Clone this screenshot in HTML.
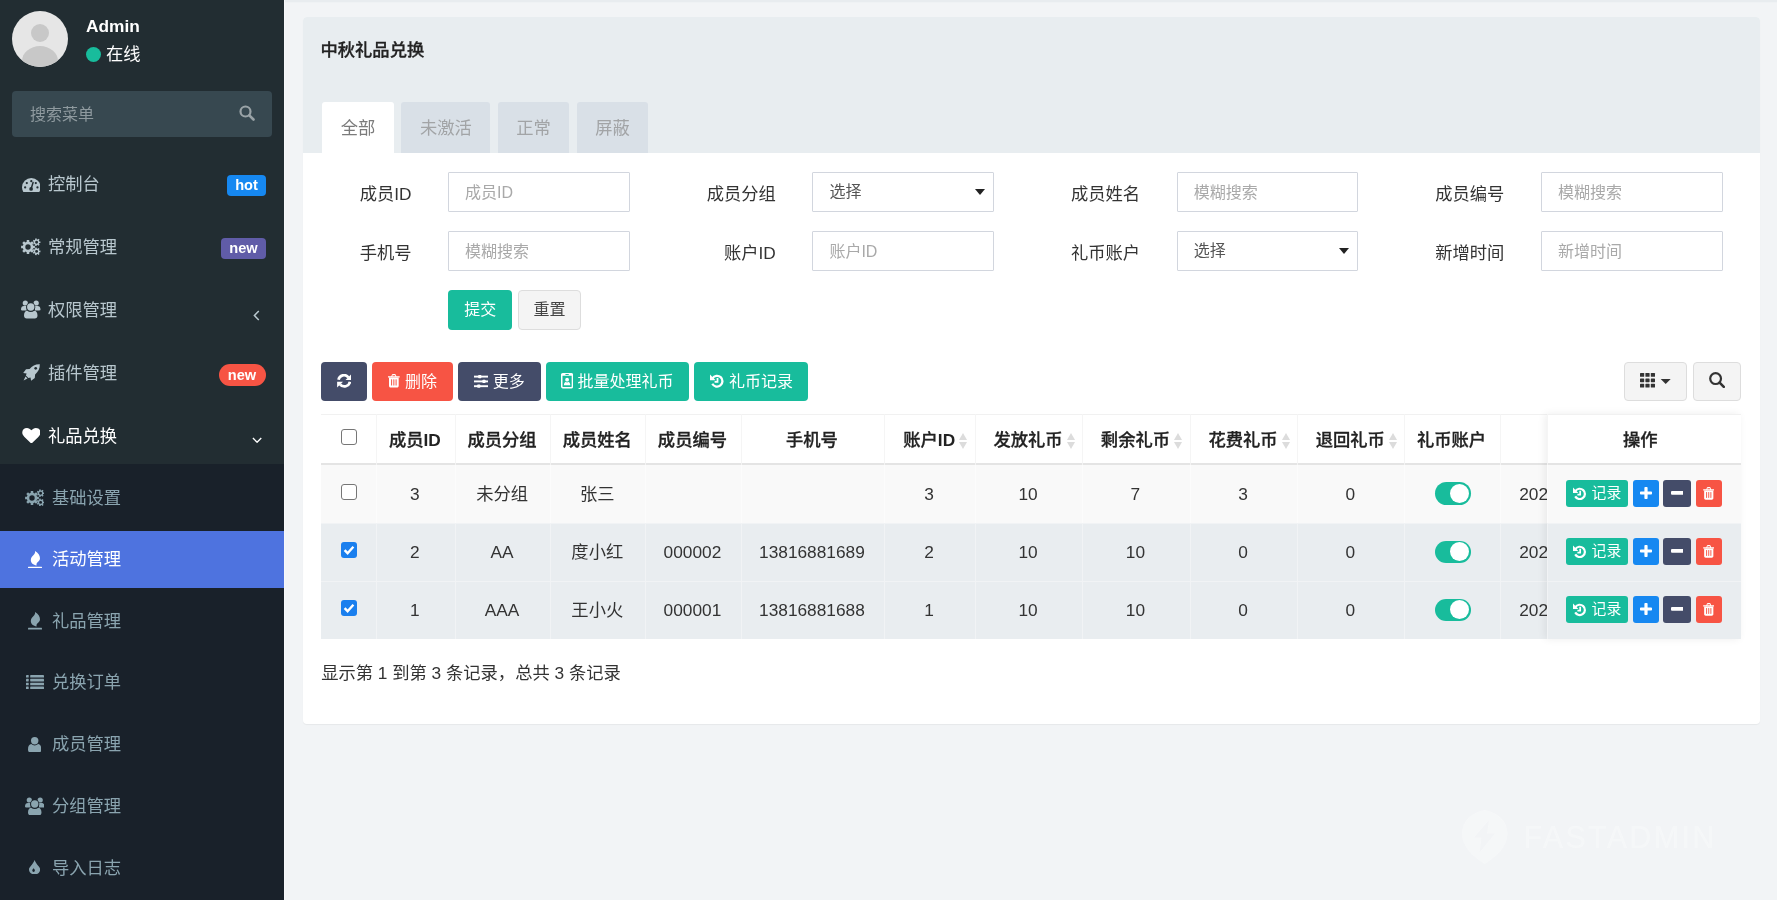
<!DOCTYPE html>
<html lang="zh-CN">
<head>
<meta charset="utf-8">
<title>中秋礼品兑换</title>
<style>
*{box-sizing:border-box;margin:0;padding:0}
html,body{width:1777px;height:900px;overflow:hidden}
body{position:relative;background:#f2f4f6;font-family:"Liberation Sans","Noto Sans CJK SC",sans-serif;font-size:17.3px;color:#333;-webkit-font-smoothing:antialiased}
.abs{position:absolute}
svg{display:block}

/* ---------- sidebar ---------- */
#sidebar{position:absolute;left:0;top:0;width:284px;height:900px;background:#222d32;overflow:hidden}
#avatar{position:absolute;left:12px;top:11px;width:56px;height:56px;border-radius:50%;background:#e6e6e6;overflow:hidden}
#uname{position:absolute;left:86px;top:15px;font-size:17.3px;font-weight:700;color:#fff;line-height:22px;letter-spacing:0}
#ustat{position:absolute;left:86px;top:43px;font-size:17.3px;color:#fff;line-height:22px;white-space:nowrap}
#ustat i{display:inline-block;width:15px;height:15px;border-radius:50%;background:#18bc9c;vertical-align:-2px;margin-right:5px}
#msearch{position:absolute;left:12px;top:91px;width:260px;height:46px;border-radius:4px;background:#374850}
#msearch span{position:absolute;left:18px;top:1px;line-height:46px;font-size:16px;color:#8f9a9f}
#msearch svg{position:absolute;left:227px;top:13.800px}
.mi{position:absolute;left:0;width:284px;height:63px;color:#b8c7ce;font-size:17.3px;white-space:nowrap}
.ic svg{position:absolute}
.mi .tx{position:absolute;left:48px;top:0;line-height:63px}
.mi.on{color:#fff}
.lab{position:absolute;height:21px;line-height:21px;font-size:14.600px;font-weight:700;color:#fff;text-align:center;border-radius:4px}
#submenu{position:absolute;left:0;top:464px;width:284px;height:436px;background:#19212a}
.si{position:absolute;left:0;width:284px;height:57px;color:#8aa4af;font-size:17.3px;white-space:nowrap}
.si .tx{position:absolute;left:52px;top:0;line-height:57px}
.si.on{background:#4e73df;color:#fff}

/* ---------- content ---------- */
#topline{position:absolute;left:284px;top:0;width:1493px;height:2px;background:#e8ecef;box-shadow:0 1px 0 #eff2f4}
#sideline{position:absolute;left:284px;top:0;width:1px;height:900px;background:#f7f8fa}
#panel{position:absolute;left:302.5px;top:17px;width:1457.5px;height:707px;background:#fff;border-radius:4px;box-shadow:0 1px 1px rgba(0,0,0,.05)}
#phead{position:absolute;left:0;top:0;width:100%;height:136px;background:#e8edf0;border-radius:4px 4px 0 0}
#ptitle{position:absolute;left:18px;top:22px;font-size:17.3px;font-weight:500;-webkit-text-stroke:.3px #222;color:#222;line-height:22px}
.tab{position:absolute;top:85px;height:51px;line-height:52.600px;text-align:center;font-size:17.3px;color:#a2a4a6;background:#d9e0e7;border-radius:3px 3px 0 0}
.tab.on{background:#fff;color:#7b7b7b}

/* ---------- form ---------- */
.fl{position:absolute;width:120px;text-align:right;font-size:17.3px;color:#333;line-height:40px;height:40px;white-space:nowrap}
.fi{position:absolute;width:181.5px;height:40px;border:1px solid #d2d6de;background:#fff;font-size:16px;color:#a9a9a9;line-height:38px;padding-left:16px;white-space:nowrap;border-radius:1px}
.fi{line-height:39.400px}
.fi.sel{color:#555;line-height:38px}
.fi.sel:after{content:"";position:absolute;right:7.800px;top:16.200px;border-left:5.300px solid transparent;border-right:5.300px solid transparent;border-top:6px solid #222}
.btn{position:absolute;height:40px;line-height:40px;text-align:center;font-size:16px;color:#fff;border-radius:4px;white-space:nowrap}
/* ---------- toolbar ---------- */
.tb{position:absolute;top:345px;height:39px;line-height:39px;border-radius:4px;color:#fff;font-size:16px;white-space:nowrap}
.tb svg{position:absolute}
.tb span{position:absolute;top:0}
.tbd{position:absolute;top:345px;height:39px;border-radius:4px;background:#f4f4f4;border:1px solid #ddd}

/* ---------- table ---------- */
#tbl{position:absolute;left:18.7px;top:397.2px;width:1419.8px;height:225px;overflow:hidden}
.row{position:absolute;left:0;width:1419.8px}
.row.h{top:0;height:50.5px;background:#fff;box-shadow:inset 0 1px 0 #f1f1f1,inset 0 -2px 0 #e4e4e4;font-weight:500;-webkit-text-stroke:.3px #222;color:#222}
.row.h b{font-weight:700;-webkit-text-stroke:0}
.row.r1{top:50.5px;height:58.1px;background:#f9f9f9}
.row.r2{top:108.6px;height:58.1px;background:#e9edf0;box-shadow:inset 0 1px 0 #f1f3f5}
.row.r3{top:166.7px;height:58.1px;background:#e9edf0;box-shadow:inset 0 1px 0 #f1f3f5}
.c{position:absolute;top:0;height:100%;padding-right:2px;text-align:center;white-space:nowrap;border-left:1px solid rgba(244,244,244,.9);font-size:17.3px}
.row.h .c{line-height:52px}
.row.r1 .c,.row.r2 .c,.row.r3 .c{line-height:58px}
.row.r1 .c{border-left-color:#fcfcfc}
.row.r2 .c,.row.r3 .c{border-left-color:#f1f3f5}
.srt{position:relative}
.srt:after{content:"";position:absolute;right:-12px;top:2.500px;width:0;height:0;border-left:4.900px solid transparent;border-right:4.900px solid transparent;border-bottom:7.800px solid #dcdcdc}
.srt:before{content:"";position:absolute;right:-12px;top:12.300px;width:0;height:0;border-left:4.900px solid transparent;border-right:4.900px solid transparent;border-top:7.800px solid #dcdcdc}
.cb{position:absolute;left:19.600px;width:16px;height:16px;border-radius:3px;border:1.4px solid #767676;background:#fff}
.cb.on{border:none;background:#1a7fee}
.tg{position:absolute;left:29.400px;top:17.8px;width:36.5px;height:22.7px;border-radius:11.4px;background:#18bc9c}
.tg:after{content:"";position:absolute;right:1.7px;top:1.8px;width:19px;height:19px;border-radius:50%;background:#fff}
#fix{position:absolute;left:1244.3px;top:397.2px;width:194px;height:225px;box-shadow:-2px 0 8px rgba(0,0,0,.07)}
#fix .row{width:194px}
.ob{position:absolute;top:15.700px;height:27px;border-radius:3px;color:#fff;font-size:14.8px;line-height:27px;white-space:nowrap}
.ob svg{position:absolute}
#pinfo{position:absolute;left:18.7px;top:645px;font-size:17.3px;line-height:22px;color:#333;white-space:nowrap}

#wm{position:absolute;left:1462px;top:810px;width:260px;height:54px;opacity:.3}
#wm svg{position:absolute;left:0;top:0}
#wm span{position:absolute;left:61.500px;top:9.500px;font-size:30.500px;line-height:34px;color:#fff;letter-spacing:2.300px;white-space:nowrap}
.ob{top:15.600px !important}
#root{position:absolute;left:0;top:0;width:1777px;height:900px;overflow:hidden;background:#f2f4f6;will-change:transform}
</style>
</head>
<body>
<div id="root">

<div id="sidebar">
  <div id="avatar">
    <svg width="56" height="56" viewBox="0 0 56 56"><circle cx="28" cy="22" r="9" fill="#c8c8c8"/><ellipse cx="28" cy="50" rx="18" ry="15" fill="#c8c8c8"/></svg>
  </div>
  <div id="uname">Admin</div>
  <div id="ustat"><i></i>在线</div>
  <div id="msearch"><span>搜索菜单</span>
    <svg width="16" height="16" viewBox="0 0 16 16"><circle cx="6.5" cy="6.5" r="5" fill="none" stroke="#9aa3a7" stroke-width="2.2"/><path d="M10.3 10.3L14.5 14.5" stroke="#9aa3a7" stroke-width="2.6" stroke-linecap="round"/></svg>
  </div>

  <div class="mi" style="top:153px"><span class="ic"><svg style="left:21.6px;top:24.6px" width="18.600" height="14.200" viewBox="0 0 19 14.5"><path fill="#b8c7ce" d="M0 9.500A9.500 9.500 0 0 1 19 9.500C19 11.200 18.600 12.700 17.800 14C17.600 14.300 17.300 14.500 16.900 14.500H2.100C1.700 14.500 1.400 14.300 1.200 14C.4 12.700 0 11.200 0 9.500Z"/><circle cx="3.2" cy="9.6" r="1.15" fill="#222d32"/><circle cx="4.9" cy="5.2" r="1.15" fill="#222d32"/><circle cx="9.5" cy="3.2" r="1.15" fill="#222d32"/><circle cx="14.1" cy="5.2" r="1.15" fill="#222d32"/><circle cx="15.8" cy="9.6" r="1.15" fill="#222d32"/><path d="M9.3 11.2L11.3 4.6" stroke="#222d32" stroke-width="1.5" stroke-linecap="round"/><circle cx="9.3" cy="11.2" r="1.9" fill="#222d32"/></svg></span><span class="tx">控制台</span><span class="lab" style="left:227px;top:22px;width:39px;background:#1688f1">hot</span></div>
  <div class="mi" style="top:216px"><span class="ic"><svg style="left:21.2px;top:22.2px" width="19.5" height="17.5" viewBox="0 0 19.5 17.5"><path fill-rule="evenodd" fill="#b8c7ce" d="M13.89 7.74 L13.89 10.26 L12.14 10.28 L11.54 11.73 L12.76 12.98 L10.98 14.76 L9.73 13.54 L8.28 14.14 L8.26 15.89 L5.74 15.89 L5.72 14.14 L4.27 13.54 L3.02 14.76 L1.24 12.98 L2.46 11.73 L1.86 10.28 L0.11 10.26 L0.11 7.74 L1.86 7.72 L2.46 6.27 L1.24 5.02 L3.02 3.24 L4.27 4.46 L5.72 3.86 L5.74 2.11 L8.26 2.11 L8.28 3.86 L9.73 4.46 L10.98 3.24 L12.76 5.02 L11.54 6.27 L12.14 7.72Z M9.70 9.00 A2.7 2.7 0 1 0 4.30 9.00 A2.7 2.7 0 1 0 9.70 9.00Z M19.42 3.40 L19.42 5.00 L18.29 4.97 L17.88 5.83 L18.61 6.69 L17.35 7.68 L16.68 6.78 L15.75 7.00 L15.53 8.10 L13.97 7.74 L14.25 6.65 L13.51 6.06 L12.51 6.58 L11.81 5.14 L12.84 4.68 L12.84 3.72 L11.81 3.26 L12.51 1.82 L13.51 2.34 L14.25 1.75 L13.97 0.66 L15.53 0.30 L15.75 1.40 L16.68 1.62 L17.35 0.72 L18.61 1.71 L17.88 2.57 L18.29 3.43Z M17.05 4.20 A1.45 1.45 0 1 0 14.15 4.20 A1.45 1.45 0 1 0 17.05 4.20Z M19.42 12.60 L19.42 14.20 L18.29 14.17 L17.88 15.03 L18.61 15.89 L17.35 16.88 L16.68 15.98 L15.75 16.20 L15.53 17.30 L13.97 16.94 L14.25 15.85 L13.51 15.26 L12.51 15.78 L11.81 14.34 L12.84 13.88 L12.84 12.92 L11.81 12.46 L12.51 11.02 L13.51 11.54 L14.25 10.95 L13.97 9.86 L15.53 9.50 L15.75 10.60 L16.68 10.82 L17.35 9.92 L18.61 10.91 L17.88 11.77 L18.29 12.63Z M17.05 13.40 A1.45 1.45 0 1 0 14.15 13.40 A1.45 1.45 0 1 0 17.05 13.40Z"/></svg></span><span class="tx">常规管理</span><span class="lab" style="left:221px;top:22px;width:45px;background:#605ca8">new</span></div>
  <div class="mi" style="top:279px"><span class="ic"><svg style="left:21.2px;top:21.3px" width="19.5" height="18.5" viewBox="0 0 19.5 18.5"><circle cx="4.3" cy="3" r="2.6" fill="#b8c7ce"/><circle cx="15.2" cy="3" r="2.6" fill="#b8c7ce"/><path fill="#b8c7ce" d="M0 9.6C0 7 1.2 6 3 6H5.5V10.5H1.2C.4 10.500 0 10.200 0 9.600Z M19.5 9.6C19.5 7 18.3 6 16.5 6H14V10.5H18.3C19.1 10.500 19.500 10.200 19.500 9.600Z"/><circle cx="9.75" cy="7" r="4.6" fill="#222d32"/><circle cx="9.75" cy="7" r="3.7" fill="#b8c7ce"/><path fill="#b8c7ce" d="M3 15.600C3 12.300 4.400 10.700 6.300 10.700C7.200 11.500 8.400 11.900 9.750 11.900C11.100 11.900 12.300 11.500 13.200 10.700C15.100 10.700 16.500 12.300 16.500 15.600C16.500 17.400 15.400 18.500 13.800 18.500H5.700C4.100 18.500 3 17.400 3 15.600Z"/></svg></span><span class="tx">权限管理</span><span class="abs" style="left:253px;top:30.500px"><svg width="7" height="11" viewBox="0 0 7 11"><path d="M5.800 1L1.400 5.500L5.800 10" fill="none" stroke="#b8c7ce" stroke-width="1.5"/></svg></span></div>
  <div class="mi" style="top:342px"><span class="ic"><svg style="left:22.6px;top:22.4px" width="17" height="17" viewBox="0 0 17 17"><path fill="#b8c7ce" d="M16.800 .2C12.600 0 9.200 1.800 6.600 4.900L3 5.200L.2 8.900L3.600 9.500L2.900 11.600L5.400 14.100L7.500 13.400L8.100 16.800L11.800 14L12.100 10.400C15.200 7.800 17 4.400 16.800 .2Z"/><path fill="#b8c7ce" d="M2.500 12.500L4.500 14.500L.6 16.400Z"/><circle cx="12.700" cy="4.300" r="1.350" fill="#222d32"/></svg></span><span class="tx">插件管理</span><span class="lab" style="left:218.5px;top:22px;width:47px;height:22px;line-height:22px;background:#f75444;border-radius:11px">new</span></div>
  <div class="mi on" style="top:405px"><span class="ic"><svg style="left:21.5px;top:22.6px" width="18.8" height="15.4" viewBox="0 0 19 16"><path fill="#fff" d="M9.5 16C9.300 16 9.100 15.900 8.900 15.700L2.300 9.400C.8 7.900 0 6.500 0 4.800C0 2 1.900 0 4.900 0C6.700 0 8.300 1.100 9.500 2.300C10.700 1.100 12.300 0 14.100 0C17.100 0 19 2 19 4.800C19 6.500 18.200 7.900 16.700 9.400L10.100 15.700C9.900 15.900 9.700 16 9.500 16Z"/></svg></span><span class="tx">礼品兑换</span><span class="abs" style="left:251.500px;top:31.800px"><svg width="10.200" height="6.500" viewBox="0 0 11 7"><path d="M1 1.200L5.500 5.600L10 1.200" fill="none" stroke="#fff" stroke-width="1.5"/></svg></span></div>

  <div id="submenu">
    <div class="si" style="top:5.5px"><span class="ic"><svg style="left:24.9px;top:19.2px" width="19.5" height="17.5" viewBox="0 0 19.5 17.5"><path fill-rule="evenodd" fill="#8aa4af" d="M13.89 7.74 L13.89 10.26 L12.14 10.28 L11.54 11.73 L12.76 12.98 L10.98 14.76 L9.73 13.54 L8.28 14.14 L8.26 15.89 L5.74 15.89 L5.72 14.14 L4.27 13.54 L3.02 14.76 L1.24 12.98 L2.46 11.73 L1.86 10.28 L0.11 10.26 L0.11 7.74 L1.86 7.72 L2.46 6.27 L1.24 5.02 L3.02 3.24 L4.27 4.46 L5.72 3.86 L5.74 2.11 L8.26 2.11 L8.28 3.86 L9.73 4.46 L10.98 3.24 L12.76 5.02 L11.54 6.27 L12.14 7.72Z M9.70 9.00 A2.7 2.7 0 1 0 4.30 9.00 A2.7 2.7 0 1 0 9.70 9.00Z M19.42 3.40 L19.42 5.00 L18.29 4.97 L17.88 5.83 L18.61 6.69 L17.35 7.68 L16.68 6.78 L15.75 7.00 L15.53 8.10 L13.97 7.74 L14.25 6.65 L13.51 6.06 L12.51 6.58 L11.81 5.14 L12.84 4.68 L12.84 3.72 L11.81 3.26 L12.51 1.82 L13.51 2.34 L14.25 1.75 L13.97 0.66 L15.53 0.30 L15.75 1.40 L16.68 1.62 L17.35 0.72 L18.61 1.71 L17.88 2.57 L18.29 3.43Z M17.05 4.20 A1.45 1.45 0 1 0 14.15 4.20 A1.45 1.45 0 1 0 17.05 4.20Z M19.42 12.60 L19.42 14.20 L18.29 14.17 L17.88 15.03 L18.61 15.89 L17.35 16.88 L16.68 15.98 L15.75 16.20 L15.53 17.30 L13.97 16.94 L14.25 15.85 L13.51 15.26 L12.51 15.78 L11.81 14.34 L12.84 13.88 L12.84 12.92 L11.81 12.46 L12.51 11.02 L13.51 11.54 L14.25 10.95 L13.97 9.86 L15.53 9.50 L15.75 10.60 L16.68 10.82 L17.35 9.92 L18.61 10.91 L17.88 11.77 L18.29 12.63Z M17.05 13.40 A1.45 1.45 0 1 0 14.15 13.40 A1.45 1.45 0 1 0 17.05 13.40Z"/></svg></span><span class="tx">基础设置</span></div>
    <div class="si on" style="top:67px"><span class="ic"><svg style="left:27.6px;top:19.5px" width="14" height="17.6" viewBox="0 0 14 17.6"><path fill="#fff" d="M7 0C10.200 1.900 12 4.500 12 7.200C12 9.500 10.400 10.400 9.300 11.600C8.500 12.500 8.400 13.400 8.600 14.400C5.300 14 2.800 12.100 2.800 9C2.800 6.200 5.200 4.700 6.400 3.100C7.100 2.100 7.300 1.100 7 0Z"/><rect x="0" y="15.8" width="14" height="1.8" rx=".4" fill="#fff"/></svg></span><span class="tx">活动管理</span></div>
    <div class="si" style="top:128.7px"><span class="ic"><svg style="left:27.6px;top:19.5px" width="14" height="17.6" viewBox="0 0 14 17.6"><path fill="#8aa4af" d="M7 0C10.200 1.900 12 4.500 12 7.200C12 9.500 10.400 10.400 9.300 11.600C8.500 12.500 8.400 13.400 8.600 14.400C5.300 14 2.800 12.100 2.800 9C2.800 6.200 5.200 4.700 6.400 3.100C7.100 2.100 7.300 1.100 7 0Z"/><rect x="0" y="15.8" width="14" height="1.8" rx=".4" fill="#8aa4af"/></svg></span><span class="tx">礼品管理</span></div>
    <div class="si" style="top:190.4px"><span class="ic"><svg style="left:25.6px;top:20.5px" width="18" height="14.2" viewBox="0 0 18 14.2"><rect x="0" y="0.00" width="2.7" height="2.6" rx=".4" fill="#8aa4af"/><rect x="4.2" y="0.00" width="13.8" height="2.600" rx=".4" fill="#8aa4af"/><rect x="0" y="3.85" width="2.7" height="2.6" rx=".4" fill="#8aa4af"/><rect x="4.2" y="3.85" width="13.8" height="2.600" rx=".4" fill="#8aa4af"/><rect x="0" y="7.70" width="2.7" height="2.6" rx=".4" fill="#8aa4af"/><rect x="4.2" y="7.70" width="13.8" height="2.600" rx=".4" fill="#8aa4af"/><rect x="0" y="11.55" width="2.7" height="2.6" rx=".4" fill="#8aa4af"/><rect x="4.2" y="11.55" width="13.8" height="2.600" rx=".4" fill="#8aa4af"/></svg></span><span class="tx">兑换订单</span></div>
    <div class="si" style="top:252.1px"><span class="ic"><svg style="left:27.8px;top:20.5px" width="13.4" height="15.6" viewBox="0 0 13.4 15.6"><circle cx="6.7" cy="3.7" r="3.7" fill="#8aa4af"/><path fill="#8aa4af" d="M0 12.400C0 9 1.400 7.200 3.300 7.100C4.200 7.900 5.400 8.400 6.700 8.400C8 8.400 9.200 7.900 10.100 7.100C12 7.200 13.400 9 13.400 12.400C13.400 14.400 12.200 15.600 10.500 15.600H2.900C1.200 15.600 0 14.400 0 12.400Z"/></svg></span><span class="tx">成员管理</span></div>
    <div class="si" style="top:313.8px"><span class="ic"><svg style="left:24.8px;top:19px" width="19.5" height="18.5" viewBox="0 0 19.5 18.5"><circle cx="4.3" cy="3" r="2.6" fill="#8aa4af"/><circle cx="15.2" cy="3" r="2.6" fill="#8aa4af"/><path fill="#8aa4af" d="M0 9.6C0 7 1.2 6 3 6H5.5V10.5H1.2C.4 10.500 0 10.200 0 9.600Z M19.5 9.6C19.5 7 18.3 6 16.5 6H14V10.5H18.3C19.1 10.500 19.500 10.200 19.500 9.600Z"/><circle cx="9.75" cy="7" r="4.6" fill="#19212a"/><circle cx="9.75" cy="7" r="3.7" fill="#8aa4af"/><path fill="#8aa4af" d="M3 15.600C3 12.300 4.400 10.700 6.300 10.700C7.200 11.500 8.400 11.900 9.750 11.900C11.100 11.900 12.300 11.500 13.200 10.700C15.100 10.700 16.500 12.300 16.500 15.600C16.500 17.400 15.400 18.500 13.800 18.500H5.700C4.100 18.500 3 17.400 3 15.600Z"/></svg></span><span class="tx">分组管理</span></div>
    <div class="si" style="top:375.5px"><span class="ic"><svg style="left:29px;top:20.1px" width="11.2" height="14.5" viewBox="0 0 11.2 14.5"><path fill="#8aa4af" d="M5.600 0C6.500 2.400 8 4.200 9.400 6C10.500 7.400 11.200 8.200 11.200 9.400C11.200 12.300 8.700 14.500 5.600 14.500C2.500 14.500 0 12.300 0 9.400C0 8.200 .7 7.400 1.800 6C3.200 4.200 4.700 2.400 5.600 0Z"/><path fill="#19212a" d="M4.600 8.200C5.100 9 5.900 9.600 5.900 10.600C5.900 11.400 5.300 11.900 4.600 11.900C3.900 11.900 3.300 11.400 3.300 10.600C3.300 9.600 4.100 9 4.600 8.200Z"/></svg></span><span class="tx">导入日志</span></div>
  </div>
</div>

<div id="topline"></div>
<div id="sideline"></div>

<div id="panel">
  <div id="phead">
    <div id="ptitle">中秋礼品兑换</div>
    <div class="tab on" style="left:19.5px;width:72px">全部</div>
    <div class="tab" style="left:98.9px;width:88.9px">未激活</div>
    <div class="tab" style="left:195.2px;width:71.6px">正常</div>
    <div class="tab" style="left:274.2px;width:71.6px">屏蔽</div>
  </div>
  <div class="fl" style="left:-11.0px;top:156.5px">成员ID</div>
  <div class="fi" style="left:145.6px;top:155px">成员ID</div>
  <div class="fl" style="left:353.3px;top:156.5px">成员分组</div>
  <div class="fi sel" style="left:509.9px;top:155px">选择</div>
  <div class="fl" style="left:717.6px;top:156.5px">成员姓名</div>
  <div class="fi" style="left:874.2px;top:155px">模糊搜索</div>
  <div class="fl" style="left:1081.9px;top:156.5px">成员编号</div>
  <div class="fi" style="left:1238.5px;top:155px">模糊搜索</div>
  <div class="fl" style="left:-11.0px;top:215.5px">手机号</div>
  <div class="fi" style="left:145.6px;top:214px">模糊搜索</div>
  <div class="fl" style="left:353.3px;top:215.5px">账户ID</div>
  <div class="fi" style="left:509.9px;top:214px">账户ID</div>
  <div class="fl" style="left:717.6px;top:215.5px">礼币账户</div>
  <div class="fi sel" style="left:874.2px;top:214px">选择</div>
  <div class="fl" style="left:1081.9px;top:215.5px">新增时间</div>
  <div class="fi" style="left:1238.5px;top:214px">新增时间</div>
  <div class="btn" style="left:145.6px;top:273.2px;width:64.3px;background:#18bc9c">提交</div>
  <div class="btn" style="left:215.2px;top:273.2px;width:63.7px;background:#f4f4f4;border:1px solid #ddd;color:#444;line-height:38px">重置</div>
  <div class="tb" style="left:18.7px;width:45.4px;background:#444c69"><svg style="left:15.6px;top:12px" width="14.5" height="13.60" viewBox="0 0 14.5 13.6"><path fill="none" stroke="#fff" stroke-width="2.700" d="M1.500 5.800A5.600 5.600 0 0 1 11.400 3.300"/><path fill="#fff" d="M14.400 0V5.900H8.500L14.400 0Z"/><path fill="none" stroke="#fff" stroke-width="2.700" d="M13 7.800A5.600 5.600 0 0 1 3.100 10.300"/><path fill="#fff" d="M.1 13.600V7.700H6L.1 13.600Z"/></svg></div>
  <div class="tb" style="left:69.5px;width:81.1px;background:#f75444"><svg style="left:16px;top:12px" width="11.7" height="13.5" viewBox="0 0 11.7 13.5"><path fill="#fff" d="M0 2.300H3.300L4 .6C4.200 .2 4.500 0 4.900 0H6.800C7.200 0 7.500 .2 7.700 .6L8.400 2.300H11.700V3.600H0Z M4.300 2.300H7.400L7 1.200H4.700Z" fill-rule="evenodd"/><path fill="#fff" d="M1 3.600H10.700V11.700C10.700 12.800 10 13.500 9.100 13.500H2.600C1.700 13.500 1 12.800 1 11.700Z"/><rect x="3.1" y="5.200" width="1" height="6.400" rx=".4" fill="#f75444"/><rect x="5.35" y="5.200" width="1" height="6.400" rx=".4" fill="#f75444"/><rect x="7.6" y="5.200" width="1" height="6.400" rx=".4" fill="#f75444"/></svg><span style="left:33px">删除</span></div>
  <div class="tb" style="left:155.7px;width:82.7px;background:#444c69"><svg style="left:15.8px;top:13.2px" width="14.2" height="12.8" viewBox="0 0 14.2 12.8"><rect x="0" y="0.6500000000000001" width="14.2" height="1.900" fill="#fff"/><rect x="4.2" y="0.0" width="3.200" height="3.200" rx=".7" fill="#fff"/><rect x="0" y="5.45" width="14.2" height="1.900" fill="#fff"/><rect x="8.4" y="4.800000000000001" width="3.200" height="3.200" rx=".7" fill="#fff"/><rect x="0" y="10.25" width="14.2" height="1.900" fill="#fff"/><rect x="3.2" y="9.6" width="3.200" height="3.200" rx=".7" fill="#fff"/></svg><span style="left:34.5px">更多</span></div>
  <div class="tb" style="left:243.5px;width:142.7px;background:#18bc9c"><svg style="left:15px;top:11.2px" width="12.2" height="15.4" viewBox="0 0 12.2 15.4"><path fill="#fff" fill-rule="evenodd" d="M1.800 0H10.400C11.500 0 12.200 .7 12.200 1.800V13.600C12.200 14.700 11.500 15.400 10.400 15.400H1.800C.7 15.400 0 14.700 0 13.600V1.800C0 .7 .7 0 1.800 0Z M1.500 2.800V13.400C1.500 13.700 1.700 13.900 2 13.900H10.200C10.500 13.900 10.700 13.700 10.700 13.400V2.800Z"/><rect x="4.300" y=".9" width="3.600" height="1" rx=".5" fill="#18bc9c"/><circle cx="6.100" cy="6.700" r="1.900" fill="#fff"/><path fill="#fff" d="M2.900 12.300C2.900 10.200 3.800 9.100 4.700 9C5.100 9.300 5.600 9.500 6.100 9.500C6.600 9.500 7.100 9.300 7.500 9C8.400 9.100 9.300 10.200 9.300 12.300Z"/></svg><span style="left:31.5px">批量处理礼币</span></div>
  <div class="tb" style="left:391.9px;width:114.1px;background:#18bc9c"><svg style="left:15.800px;top:12px" width="14" height="14" viewBox="0 0 14 14"><path fill="none" stroke="#fff" stroke-width="2.300" d="M2.500 4.300A5.400 5.400 0 1 1 2.300 9.800"/><path fill="#fff" d="M0 .6L5.600 6.200H0Z"/><path fill="none" stroke="#fff" stroke-width="1.800" d="M7.500 4V7.900H4.600"/></svg><span style="left:34.5px">礼币记录</span></div>
  <div class="tbd" style="left:1321.8px;width:62.4px"><svg style="position:absolute;left:15px;top:10.300px" width="31" height="14.600" viewBox="0 0 31 14.6"><rect x="0.0" y="0.0" width="4.200" height="3.800" rx=".6" fill="#333"/><rect x="5.4" y="0.0" width="4.200" height="3.800" rx=".6" fill="#333"/><rect x="10.8" y="0.0" width="4.200" height="3.800" rx=".6" fill="#333"/><rect x="0.0" y="5.4" width="4.200" height="3.800" rx=".6" fill="#333"/><rect x="5.4" y="5.4" width="4.200" height="3.800" rx=".6" fill="#333"/><rect x="10.8" y="5.4" width="4.200" height="3.800" rx=".6" fill="#333"/><rect x="0.0" y="10.8" width="4.200" height="3.800" rx=".6" fill="#333"/><rect x="5.4" y="10.8" width="4.200" height="3.800" rx=".6" fill="#333"/><rect x="10.8" y="10.8" width="4.200" height="3.800" rx=".6" fill="#333"/><path fill="#333" d="M20.700 6.100H30.700L25.700 11.100Z"/></svg></div>
  <div class="tbd" style="left:1390.9px;width:47.5px"><svg style="position:absolute;left:15px;top:9px" width="16" height="16" viewBox="0 0 16 16"><circle cx="6.600" cy="6.600" r="5.400" fill="none" stroke="#333" stroke-width="2.200"/><path d="M10.600 10.600L14.800 14.800" stroke="#333" stroke-width="2.600" stroke-linecap="round"/></svg></div>
  <div id="tbl">
    <div class="row h"><div class="c" style="left:0.0px;width:54.6px;border-left:none"><i class="cb" style="top:14.800px"></i></div><div class="c" style="left:54.6px;width:79.1px">成员<b>ID</b></div><div class="c" style="left:133.7px;width:95.4px">成员分组</div><div class="c" style="left:229.1px;width:95.0px">成员姓名</div><div class="c" style="left:324.1px;width:95.3px">成员编号</div><div class="c" style="left:419.4px;width:143.7px">手机号</div><div class="c" style="left:563.1px;width:90.8px"><span class="srt">账户<b>ID</b></span></div><div class="c" style="left:653.9px;width:106.9px"><span class="srt">发放礼币</span></div><div class="c" style="left:760.8px;width:107.9px"><span class="srt">剩余礼币</span></div><div class="c" style="left:868.7px;width:107.4px"><span class="srt">花费礼币</span></div><div class="c" style="left:976.1px;width:107.0px"><span class="srt">退回礼币</span></div><div class="c" style="left:1083.1px;width:95.4px">礼币账户</div><div class="c" style="left:1178.5px;width:241.3px"></div></div>
    <div class="row r1"><div class="c" style="left:0.0px;width:54.6px;border-left:none"><i class="cb" style="top:19.3px"></i></div><div class="c" style="left:54.6px;width:79.1px">3</div><div class="c" style="left:133.7px;width:95.4px">未分组</div><div class="c" style="left:229.1px;width:95.0px">张三</div><div class="c" style="left:324.1px;width:95.3px"></div><div class="c" style="left:419.4px;width:143.7px"></div><div class="c" style="left:563.1px;width:90.8px">3</div><div class="c" style="left:653.9px;width:106.9px">10</div><div class="c" style="left:760.8px;width:107.9px">7</div><div class="c" style="left:868.7px;width:107.4px">3</div><div class="c" style="left:976.1px;width:107.0px">0</div><div class="c" style="left:1083.1px;width:95.4px"><i class="tg"></i></div><div class="c" style="left:1178.5px;width:241.3px;text-align:left;padding-left:18.5px">202</div></div>
    <div class="row r2"><div class="c" style="left:0.0px;width:54.6px;border-left:none"><i class="cb on" style="top:19.3px"><svg width="16" height="16" viewBox="0 0 16 16"><path d="M3.6 8.2L6.6 11.2L12.4 4.8" fill="none" stroke="#fff" stroke-width="2.400"/></svg></i></div><div class="c" style="left:54.6px;width:79.1px">2</div><div class="c" style="left:133.7px;width:95.4px">AA</div><div class="c" style="left:229.1px;width:95.0px">度小红</div><div class="c" style="left:324.1px;width:95.3px">000002</div><div class="c" style="left:419.4px;width:143.7px">13816881689</div><div class="c" style="left:563.1px;width:90.8px">2</div><div class="c" style="left:653.9px;width:106.9px">10</div><div class="c" style="left:760.8px;width:107.9px">10</div><div class="c" style="left:868.7px;width:107.4px">0</div><div class="c" style="left:976.1px;width:107.0px">0</div><div class="c" style="left:1083.1px;width:95.4px"><i class="tg"></i></div><div class="c" style="left:1178.5px;width:241.3px;text-align:left;padding-left:18.5px">202</div></div>
    <div class="row r3"><div class="c" style="left:0.0px;width:54.6px;border-left:none"><i class="cb on" style="top:19.3px"><svg width="16" height="16" viewBox="0 0 16 16"><path d="M3.6 8.2L6.6 11.2L12.4 4.8" fill="none" stroke="#fff" stroke-width="2.400"/></svg></i></div><div class="c" style="left:54.6px;width:79.1px">1</div><div class="c" style="left:133.7px;width:95.4px">AAA</div><div class="c" style="left:229.1px;width:95.0px">王小火</div><div class="c" style="left:324.1px;width:95.3px">000001</div><div class="c" style="left:419.4px;width:143.7px">13816881688</div><div class="c" style="left:563.1px;width:90.8px">1</div><div class="c" style="left:653.9px;width:106.9px">10</div><div class="c" style="left:760.8px;width:107.9px">10</div><div class="c" style="left:868.7px;width:107.4px">0</div><div class="c" style="left:976.1px;width:107.0px">0</div><div class="c" style="left:1083.1px;width:95.4px"><i class="tg"></i></div><div class="c" style="left:1178.5px;width:241.3px;text-align:left;padding-left:18.5px">202</div></div>
  </div>
  <div id="fix">
    <div class="row h"><div class="c" style="left:0;width:188px">操作</div></div>
    <div class="row r1"><div class="c" style="left:0;width:194px"><span class="ob" style="left:17.800px;width:62px;background:#18bc9c"><svg style="left:7.600px;top:6.700px" width="13.4" height="13.4" viewBox="0 0 14 14"><path fill="none" stroke="#fff" stroke-width="2.300" d="M2.500 4.300A5.400 5.400 0 1 1 2.300 9.800"/><path fill="#fff" d="M0 .6L5.600 6.200H0Z"/><path fill="none" stroke="#fff" stroke-width="1.800" d="M7.500 4V7.900H4.600"/></svg><span style="position:absolute;left:26px;top:0">记录</span></span><span class="ob" style="left:84.800px;width:26.200px;background:#1688f1"><svg style="left:7.300px;top:6.900px" width="12" height="12" viewBox="0 0 12 12"><path fill="#fff" d="M4.400 .8C4.400 .3 4.700 0 5.200 0H6.800C7.300 0 7.600 .3 7.600 .8V4.400H11.200C11.700 4.400 12 4.700 12 5.200V6.800C12 7.300 11.700 7.600 11.200 7.600H7.600V11.200C7.600 11.700 7.300 12 6.800 12H5.200C4.700 12 4.400 11.700 4.400 11.200V7.600H.8C.3 7.600 0 7.300 0 6.800V5.200C0 4.700 .3 4.400 .8 4.400H4.400Z"/></svg></span><span class="ob" style="left:115.700px;width:27.400px;background:#444c69"><svg style="left:7.300px;top:10.900px" width="12.600" height="3.800" viewBox="0 0 12.6 3.8"><rect width="12.600" height="3.800" rx="1" fill="#fff"/></svg></span><span class="ob" style="left:148.100px;width:26.100px;background:#f75444"><svg style="left:7px;top:7px" width="11.5" height="12.8" viewBox="0 0 11.7 13.5"><path fill="#fff" d="M0 2.300H3.300L4 .6C4.200 .2 4.500 0 4.900 0H6.800C7.200 0 7.500 .2 7.700 .6L8.400 2.300H11.700V3.600H0Z M4.300 2.300H7.400L7 1.200H4.700Z" fill-rule="evenodd"/><path fill="#fff" d="M1 3.600H10.700V11.700C10.700 12.800 10 13.500 9.100 13.500H2.600C1.700 13.500 1 12.800 1 11.700Z"/><rect x="3.1" y="5.200" width="1" height="6.400" rx=".4" fill="#f75444"/><rect x="5.35" y="5.200" width="1" height="6.400" rx=".4" fill="#f75444"/><rect x="7.6" y="5.200" width="1" height="6.400" rx=".4" fill="#f75444"/></svg></span></div></div>
    <div class="row r2"><div class="c" style="left:0;width:194px"><span class="ob" style="left:17.800px;width:62px;background:#18bc9c"><svg style="left:7.600px;top:6.700px" width="13.4" height="13.4" viewBox="0 0 14 14"><path fill="none" stroke="#fff" stroke-width="2.300" d="M2.500 4.300A5.400 5.400 0 1 1 2.300 9.800"/><path fill="#fff" d="M0 .6L5.600 6.200H0Z"/><path fill="none" stroke="#fff" stroke-width="1.800" d="M7.500 4V7.900H4.600"/></svg><span style="position:absolute;left:26px;top:0">记录</span></span><span class="ob" style="left:84.800px;width:26.200px;background:#1688f1"><svg style="left:7.300px;top:6.900px" width="12" height="12" viewBox="0 0 12 12"><path fill="#fff" d="M4.400 .8C4.400 .3 4.700 0 5.200 0H6.800C7.300 0 7.600 .3 7.600 .8V4.400H11.200C11.700 4.400 12 4.700 12 5.200V6.800C12 7.300 11.700 7.600 11.200 7.600H7.600V11.200C7.600 11.700 7.300 12 6.800 12H5.200C4.700 12 4.400 11.700 4.400 11.200V7.600H.8C.3 7.600 0 7.300 0 6.800V5.200C0 4.700 .3 4.400 .8 4.400H4.400Z"/></svg></span><span class="ob" style="left:115.700px;width:27.400px;background:#444c69"><svg style="left:7.300px;top:10.900px" width="12.600" height="3.800" viewBox="0 0 12.6 3.8"><rect width="12.600" height="3.800" rx="1" fill="#fff"/></svg></span><span class="ob" style="left:148.100px;width:26.100px;background:#f75444"><svg style="left:7px;top:7px" width="11.5" height="12.8" viewBox="0 0 11.7 13.5"><path fill="#fff" d="M0 2.300H3.300L4 .6C4.200 .2 4.500 0 4.900 0H6.800C7.200 0 7.500 .2 7.700 .6L8.400 2.300H11.700V3.600H0Z M4.300 2.300H7.400L7 1.200H4.700Z" fill-rule="evenodd"/><path fill="#fff" d="M1 3.600H10.700V11.700C10.700 12.800 10 13.500 9.100 13.500H2.600C1.700 13.500 1 12.800 1 11.700Z"/><rect x="3.1" y="5.200" width="1" height="6.400" rx=".4" fill="#f75444"/><rect x="5.35" y="5.200" width="1" height="6.400" rx=".4" fill="#f75444"/><rect x="7.6" y="5.200" width="1" height="6.400" rx=".4" fill="#f75444"/></svg></span></div></div>
    <div class="row r3"><div class="c" style="left:0;width:194px"><span class="ob" style="left:17.800px;width:62px;background:#18bc9c"><svg style="left:7.600px;top:6.700px" width="13.4" height="13.4" viewBox="0 0 14 14"><path fill="none" stroke="#fff" stroke-width="2.300" d="M2.500 4.300A5.400 5.400 0 1 1 2.300 9.800"/><path fill="#fff" d="M0 .6L5.600 6.200H0Z"/><path fill="none" stroke="#fff" stroke-width="1.800" d="M7.500 4V7.900H4.600"/></svg><span style="position:absolute;left:26px;top:0">记录</span></span><span class="ob" style="left:84.800px;width:26.200px;background:#1688f1"><svg style="left:7.300px;top:6.900px" width="12" height="12" viewBox="0 0 12 12"><path fill="#fff" d="M4.400 .8C4.400 .3 4.700 0 5.200 0H6.800C7.300 0 7.600 .3 7.600 .8V4.400H11.200C11.700 4.400 12 4.700 12 5.200V6.800C12 7.300 11.700 7.600 11.200 7.600H7.600V11.200C7.600 11.700 7.300 12 6.800 12H5.200C4.700 12 4.400 11.700 4.400 11.200V7.600H.8C.3 7.600 0 7.300 0 6.800V5.200C0 4.700 .3 4.400 .8 4.400H4.400Z"/></svg></span><span class="ob" style="left:115.700px;width:27.400px;background:#444c69"><svg style="left:7.300px;top:10.900px" width="12.600" height="3.800" viewBox="0 0 12.6 3.8"><rect width="12.600" height="3.800" rx="1" fill="#fff"/></svg></span><span class="ob" style="left:148.100px;width:26.100px;background:#f75444"><svg style="left:7px;top:7px" width="11.5" height="12.8" viewBox="0 0 11.7 13.5"><path fill="#fff" d="M0 2.300H3.300L4 .6C4.200 .2 4.500 0 4.900 0H6.800C7.200 0 7.500 .2 7.700 .6L8.400 2.300H11.700V3.600H0Z M4.300 2.300H7.400L7 1.200H4.700Z" fill-rule="evenodd"/><path fill="#fff" d="M1 3.600H10.700V11.700C10.700 12.800 10 13.500 9.100 13.500H2.600C1.700 13.500 1 12.800 1 11.700Z"/><rect x="3.1" y="5.200" width="1" height="6.400" rx=".4" fill="#f75444"/><rect x="5.35" y="5.200" width="1" height="6.400" rx=".4" fill="#f75444"/><rect x="7.6" y="5.200" width="1" height="6.400" rx=".4" fill="#f75444"/></svg></span></div></div>
  </div>
  <div id="pinfo">显示第 1 到第 3 条记录，总共 3 条记录</div>
</div>

<div id="wm"><svg width="45.500" height="54" viewBox="0 0 45.5 54"><path fill="#fff" fill-rule="evenodd" d="M22.750 0C36 2.500 45.500 11 45.500 24C45.500 36 35 46.500 22.750 54C10.500 46.500 0 36 0 24C0 11 9.500 2.500 22.750 0Z M27 10L12 27.500H19.500L17.500 42.500L33 23.500H25Z"/></svg><span>FASTADMIN</span></div>
</div>
</body>
</html>
